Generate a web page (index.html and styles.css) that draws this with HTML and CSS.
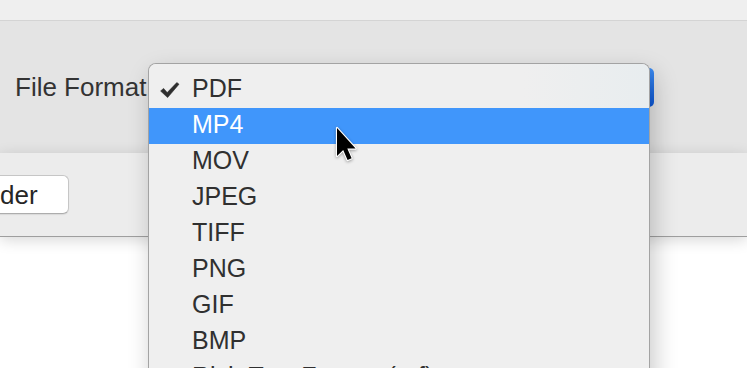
FILE: index.html
```html
<!DOCTYPE html>
<html>
<head>
<meta charset="utf-8">
<link rel="stylesheet" href="styles.css">
</head>
<body>
<div class="window">
  <div class="topbar"></div>
  <div class="panel">
    <div class="format-row">
      <span class="label">File Format</span>
      <div class="popup"></div>
    </div>
  </div>
  <div class="actions">
    <button class="btn">Folder</button>
  </div>
  <div class="content"></div>

  <div class="menu">
    <div class="item checked"><svg class="check" viewBox="0 0 20 16" width="20" height="16"><path d="M0.6 9 L3.6 6.4 L7.2 10.6 L16.8 0.6 L19 2.2 L7.6 15.6 Z" fill="#2e2e2e" stroke="#2e2e2e" stroke-width="0.6" stroke-linejoin="round"/></svg>PDF</div>
    <div class="item active">MP4</div>
    <div class="item">MOV</div>
    <div class="item">JPEG</div>
    <div class="item">TIFF</div>
    <div class="item">PNG</div>
    <div class="item">GIF</div>
    <div class="item">BMP</div>
    <div class="item">Rich Text Format (.rtf)</div>
  </div>

  <svg class="cursor" viewBox="0 0 26 40" width="26" height="40">
    <path d="M3 2 L3 30 L9.2 24 L13.6 34 L17.6 32.3 L13.3 22.6 L21.6 22.6 Z" fill="#000" stroke="#fff" stroke-width="2.2" stroke-linejoin="round" paint-order="stroke"/>
  </svg>
</div>
</body>
</html>
```

FILE: styles.css
```css
* { box-sizing: border-box; }
html, body {
  margin: 0;
  padding: 0;
  width: 747px;
  height: 368px;
  overflow: hidden;
  background: #ffffff;
  font-family: "Liberation Sans", Arial, Helvetica, sans-serif;
}
.window {
  position: relative;
  width: 747px;
  height: 368px;
  overflow: hidden;
  display: flex;
  flex-direction: column;
}
.topbar {
  height: 21px;
  flex: none;
  background: #efefef;
  border-bottom: 1px solid #d4d4d4;
}
.panel {
  height: 132px;
  flex: none;
  background: #e4e4e4;
  padding: 47px 0 0 15px;
}
.format-row {
  display: flex;
  align-items: center;
  gap: 6px;
  height: 39px;
}
.label {
  font-size: 26px;
  color: #333333;
  line-height: 39px;
}
.popup {
  width: 502px;
  height: 39px;
  border-radius: 5px;
  background: linear-gradient(#3d8cf2, #0b56d6);
}
.actions {
  position: relative;
  z-index: 1;
  height: 84px;
  flex: none;
  background: #ececec;
  border-bottom: 1px solid #9e9e9e;
  box-shadow: 0 3px 14px rgba(0,0,0,0.16);
  padding-top: 22px;
}
.btn {
  margin-left: -67px;
  height: 39px;
  padding: 0 30px;
  background: #ffffff;
  border: 1px solid #c6c6c6;
  border-bottom-color: #adadad;
  border-radius: 6px;
  font-family: inherit;
  font-size: 26px;
  color: #262626;
  line-height: 36px;
  box-shadow: 0 1px 1px rgba(0,0,0,0.08);
}
.content {
  flex: 1;
  background: #ffffff;
}
.menu {
  position: absolute;
  z-index: 2;
  left: 148px;
  top: 63px;
  width: 502px;
  height: 360px;
  background: #efefef;
  border: 1px solid #a3a3a3;
  border-bottom: none;
  border-radius: 8px 8px 0 0;
  padding-top: 8px;
  box-shadow: 4px 10px 24px rgba(0,0,0,0.22);
}
.item {
  position: relative;
  height: 36px;
  line-height: 32px;
  padding-bottom: 4px;
  padding-left: 43px;
  font-size: 25px;
  color: #303030;
  white-space: nowrap;
}
.item.checked {
  background: linear-gradient(90deg, #efefef 75%, #e8edef 100%);
  border-radius: 7px 7px 0 0;
  margin-top: -8px;
  padding-top: 8px;
  height: 44px;
}
.item.active {
  background: #4096fb;
  color: #ffffff;
}
.check {
  position: absolute;
  left: 11px;
  top: 18px;
}
.cursor {
  position: absolute;
  z-index: 3;
  left: 334px;
  top: 126px;
  filter: drop-shadow(0 1px 1.5px rgba(0,0,0,0.35));
}
```
